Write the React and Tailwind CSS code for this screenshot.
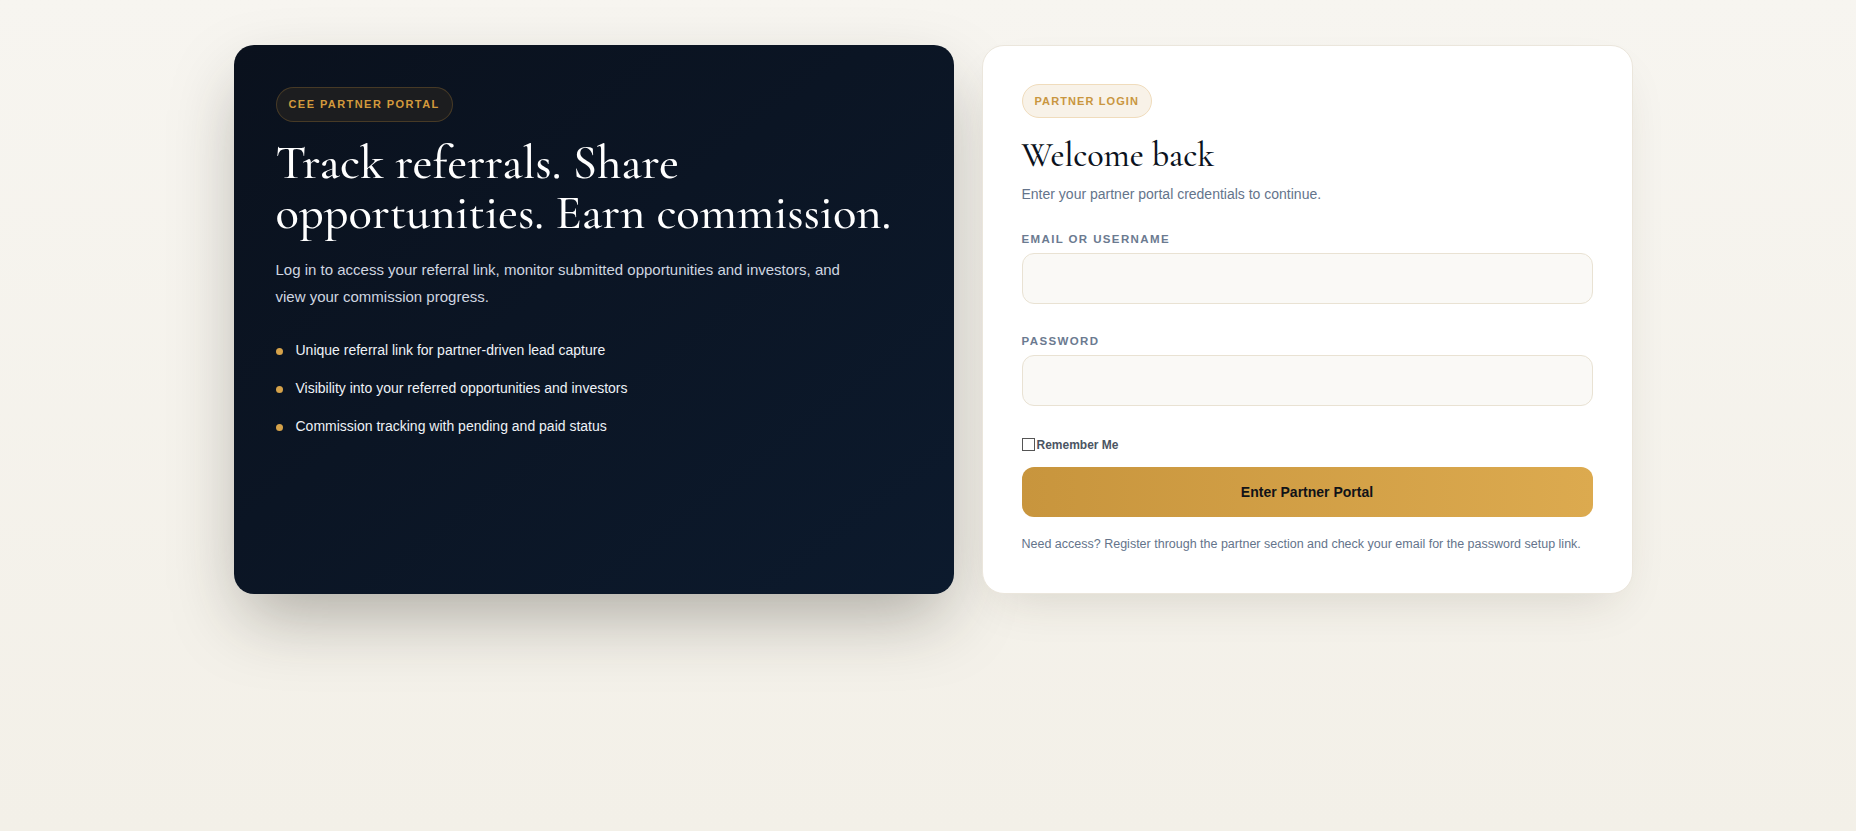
import React from 'react';

const serif = "font-['Cormorant_Garamond','Liberation_Serif',serif]";
const sans = "font-['Liberation_Sans',Arial,sans-serif]";

const highlights = [
  'Unique referral link for partner-driven lead capture',
  'Visibility into your referred opportunities and investors',
  'Commission tracking with pending and paid status',
];

const IntroPanel = () => (
  <section className="rounded-[20px] bg-gradient-to-br from-[#0a111d] to-[#0c1a2d] px-[42px] pt-[42px] pb-10 shadow-[0_30px_70px_-10px_rgba(40,36,28,0.35)]">
    <span className="inline-flex h-[35px] items-center rounded-full border border-[#c8923a]/25 bg-[#1c1d1f] px-[12px] text-[11px] font-bold uppercase tracking-[0.13em] text-[#d39a3c]">
      CEE Partner Portal
    </span>
    <h1 className={`${serif} mt-[16px] text-[48.5px] font-medium leading-[50px] text-white`}>
      Track referrals. Share opportunities. Earn commission.
    </h1>
    <p className="mt-[18px] max-w-[580px] text-[15px] leading-[27px] text-[#cfd6e0]">
      Log in to access your referral link, monitor submitted opportunities and investors, and view your
      commission progress.
    </p>
    <ul className="mt-[31px] flex flex-col gap-[20px]">
      {highlights.map((item) => (
        <li key={item} className="flex items-center gap-[13px] text-[14px] leading-[18px] text-[#eef2f7]">
          <span className="mt-[3px] h-[7px] w-[7px] shrink-0 rounded-full bg-[#d5a24a]" />
          {item}
        </li>
      ))}
    </ul>
  </section>
);

const Field = ({ label, type }) => (
  <label className="block">
    <span className="block text-[11.5px] font-bold uppercase leading-[14px] tracking-[0.12em] text-[#6b7a90]">{label}</span>
    <input
      type={type}
      className="mt-[7px] block h-[51px] w-full rounded-[12px] border border-[#e9e2d3] bg-[#faf9f6] px-4 text-sm outline-none"
    />
  </label>
);

const LoginPanel = () => (
  <section className="rounded-[22px] border border-[#ebe6dc] bg-white px-[39px] pt-[38px] pb-[39px] shadow-[0_20px_50px_-20px_rgba(60,50,30,0.18)]">
    <span className="inline-flex h-[34px] items-center rounded-full border border-[#f0dcbc] bg-[#f8f2e8] px-[12px] text-[11px] font-bold uppercase tracking-[0.1em] text-[#c9963f]">
      Partner Login
    </span>
    <h2 className={`${serif} mt-[18px] text-[34px] font-medium leading-[40px] text-[#0b1220]`}>Welcome back</h2>
    <p className="mt-[8px] text-[14px] leading-[20px] text-[#64748b]">Enter your partner portal credentials to continue.</p>

    <form className="mt-[28px]" onSubmit={(e) => e.preventDefault()}>
      <Field label="Email or username" type="text" />
      <div className="mt-[30px]">
        <Field label="Password" type="password" />
      </div>
      <label className="mt-[30px] flex items-center gap-[2px] text-[12px] font-semibold leading-[14px] text-[#4b5563]">
        <span className="h-[13px] w-[13px] border border-[#555] bg-white" />
        <span className="mt-[2px]">Remember Me</span>
      </label>
      <button
        type="submit"
        className="mt-[15px] h-[50px] w-full rounded-[12px] bg-gradient-to-r from-[#c8953d] to-[#dcaa4f] text-[14px] font-bold text-[#111318]"
      >
        Enter Partner Portal
      </button>
    </form>
    <p className="mt-[17px] text-[12.5px] leading-[20px] text-[#64748b]">
      Need access? Register through the partner section and check your email for the password setup link.
    </p>
  </section>
);

export default function App() {
  return (
    <main className={`${sans} min-h-[831px] bg-gradient-to-b from-[#f7f5f0] to-[#f3f0e8] pt-[45px]`}>
      <div className="mx-auto grid w-[1399px] translate-x-[5px] grid-cols-[720px_651px] items-stretch gap-[28px]">
        <IntroPanel />
        <LoginPanel />
      </div>
    </main>
  );
}
